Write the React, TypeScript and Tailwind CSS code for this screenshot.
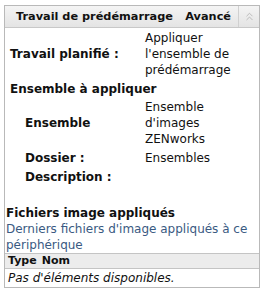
import { ChevronsUp } from 'lucide-react';

interface Row {
  label: string
  value?: string[]
  gap: string
}

const rows: Row[] = [
  { label: 'Ensemble', value: ['Ensemble', "d'images", 'ZENworks'], gap: 'mt-[2px]' },
  { label: 'Dossier :', value: ['Ensembles'], gap: 'mt-[3px]' },
  { label: 'Description :', gap: 'mt-[3px]' },
]

function FieldRow({ row, indent }: { row: Row; indent?: boolean }) {
  return (
    <div className={`flex items-center ${row.gap}`}>
      <div className={`w-[140px] shrink-0 font-bold ${indent ? 'pl-[20px]' : 'pl-[5px]'}`}>{row.label}</div>
      <div className="flex flex-col">
        {(row.value || ['\u00a0']).map((line, i) => (
          <span key={i}>{line}</span>
        ))}
      </div>
    </div>
  )
}

export default function App() {
  return (
    <div className="w-[264px] h-[290px] bg-white pt-[5px] pl-[4px] text-[12px] leading-[16px] text-[#111]" style={{ fontFamily: '"DejaVu Sans", Verdana, sans-serif' }}>
      <div className="w-[256px] border border-[#b9b9b9]">
        <div className="flex h-[22px] items-center border-b border-[#c8c8c8] bg-gradient-to-b from-[#f4f4f4] to-[#e4e4e4] text-[11.3px] font-bold">
          <div className="flex-1 pl-[11px]">Travail de prédémarrage</div>
          <div className="pr-[7px]">Avancé</div>
          <div className="flex h-full w-[21px] items-center justify-center border-l border-[#d0d0d0]">
            <ChevronsUp size={13} strokeWidth={1.3} className="text-[#a8a8a8]" />
          </div>
        </div>
        <div className="pt-[2px]">
          <FieldRow row={{ label: 'Travail planifié :', value: ['Appliquer', "l'ensemble de", 'prédémarrage'], gap: 'mt-0' }} />
          <div className="mt-[3px] pl-[5px] font-bold">Ensemble à appliquer</div>
          {rows.map((r) => (
            <FieldRow key={r.label} row={r} indent />
          ))}
        </div>
        <div className="mt-[20px] pl-[1px]">
          <div className="font-bold">Fichiers image appliqués</div>
          <div className="text-[#3a5a82]">Derniers fichiers d'image appliqués à ce périphérique</div>
        </div>
        <div className="flex h-[16px] items-center gap-[5px] border-y border-[#c4c4c4] bg-[#ececec] pl-[3px] text-[11px] font-bold">
          <span>Type</span>
          <span>Nom</span>
        </div>
        <div className="flex h-[18px] items-center pl-[3px] italic">Pas d'éléments disponibles.</div>
      </div>
    </div>
  )
}
